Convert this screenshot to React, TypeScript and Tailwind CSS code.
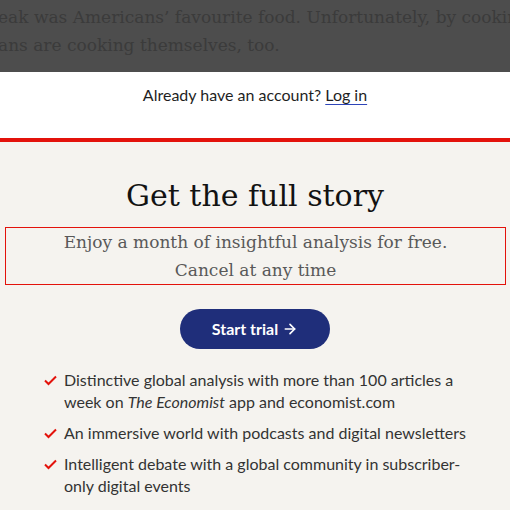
import { ArrowRight } from 'lucide-react';

const sans = { fontFamily: 'Lato, "Open Sans", sans-serif' };
const serif = { fontFamily: '"DejaVu Serif", serif' };

function Check() {
    return (
        <svg width="13" height="11" viewBox="0 0 13 11" className="shrink-0 mt-[6px]">
            <path d="M1 5.5 L4.5 9 L12 1.5" fill="none" stroke="#e3120b" strokeWidth="2" />
        </svg>
    );
}

const ITEMS = [
    <>Distinctive global analysis with more than 100 articles a week on <i>The Economist</i> app and economist.com</>,
    <>An immersive world with podcasts and digital newsletters</>,
    <>Intelligent debate with a global community in subscriber-only digital events</>,
];

export default function App() {
    return (
        <div className="w-[510px] h-[510px] overflow-hidden bg-[#f5f3ef]">
            {/* Dimmed article behind the paywall */}
            <div className="h-[72px] bg-[#4d4d4d] overflow-hidden pt-[3px]">
                <p className="whitespace-nowrap -ml-[2px] text-[17px] leading-[28px] text-[#3b3b3b]" style={serif}>
                    eak was Americans’ favourite food. Unfortunately, by cooking
                </p>
                <p className="whitespace-nowrap -ml-[2px] text-[17px] leading-[28px] text-[#3b3b3b]" style={serif}>
                    ans are cooking themselves, too.
                </p>
            </div>

            {/* Login band */}
            <div className="h-[66px] bg-white flex justify-center pt-[12px]">
                <p className="text-[16px] leading-[22px] text-[#1f1f1f]" style={sans}>
                    Already have an account?{' '}
                    <span className="underline decoration-[#2e45b8] underline-offset-[3px]">Log in</span>
                </p>
            </div>
            <div className="h-[4px] bg-[#e3120b]" />

            {/* Paywall */}
            <div className="flex flex-col items-center pt-[34px]">
                <h2 className="text-[30px] leading-[40px] text-[#121212]" style={serif}>Get the full story</h2>
                <div className="mt-[11px] w-[501px] ml-[1px] border border-[#e3120b] text-center text-[17px] leading-[28px] text-[#595959]" style={serif}>
                    <p>Enjoy a month of insightful analysis for free.</p>
                    <p>Cancel at any time</p>
                </div>
                <button className="mt-[24px] w-[150px] h-[40px] rounded-full bg-[#1f2e7a] text-white font-bold text-[16px] flex items-center justify-center gap-1" style={sans}>
                    Start trial <ArrowRight className="w-4 h-4" strokeWidth={2.5} />
                </button>
            </div>

            <ul className="mt-[20px] pl-[44px] pr-[40px] flex flex-col gap-[9px]" style={sans}>
                {ITEMS.map((item, i) => (
                    <li key={i} className="flex gap-[7px] text-[16px] leading-[22px] text-[#333]">
                        <Check />
                        <span>{item}</span>
                    </li>
                ))}
            </ul>
        </div>
    );
}
